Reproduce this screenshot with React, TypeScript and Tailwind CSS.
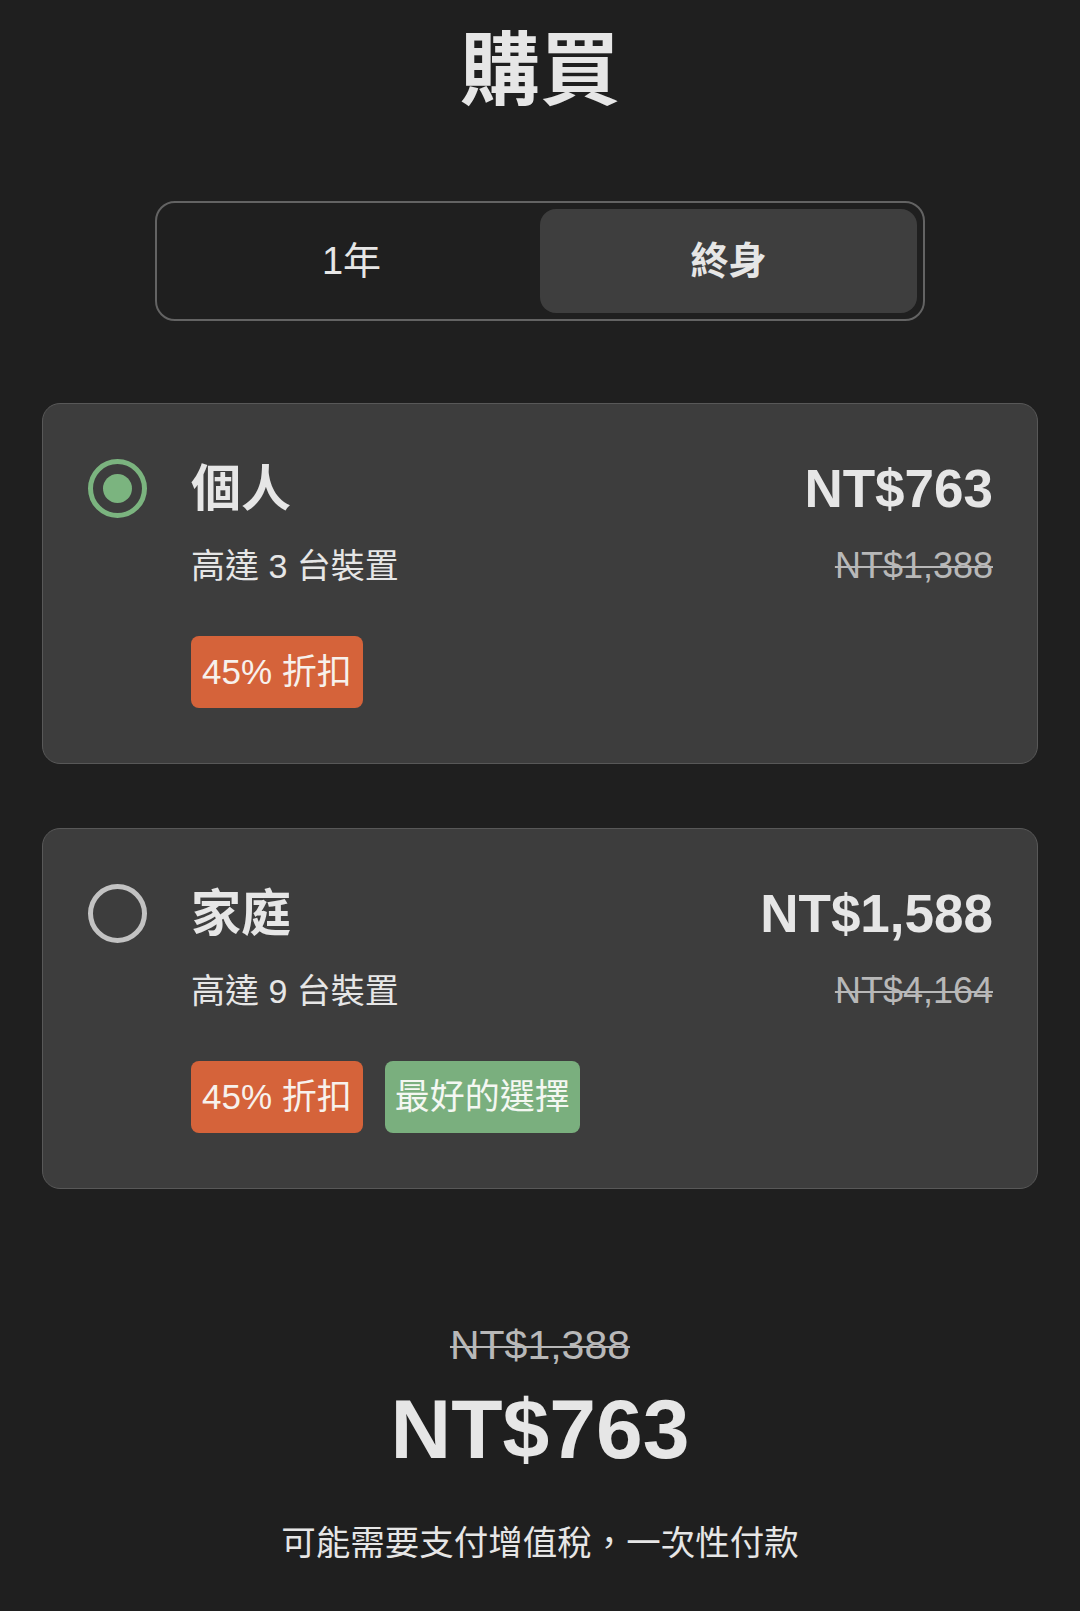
import { useState } from "react";

const plans = [
  {
    id: "personal",
    name: "個人",
    devices: "高達 3 台裝置",
    price: "NT$763",
    original: "NT$1,388",
    best: false,
  },
  {
    id: "family",
    name: "家庭",
    devices: "高達 9 台裝置",
    price: "NT$1,588",
    original: "NT$4,164",
    best: true,
  },
];

export default function App() {
  const [term, setTerm] = useState<"year" | "life">("life");
  const [selected, setSelected] = useState("personal");

  const current = plans.find((p) => p.id === selected) ?? plans[0];

  return (
    <div className="min-h-[1611px] bg-[#1f1f1f] text-[#e6e6e6] font-['Liberation_Sans','Noto_Sans_CJK_TC',sans-serif] flex flex-col items-center pt-[23px]">
      <h1 className="text-[80px] leading-none font-bold font-['Noto_Sans_CJK_TC',sans-serif]">購買</h1>

      {/* 方案期間切換 */}
      <div className="mt-[98px] w-[770px] h-[120px] rounded-[20px] border-2 border-[#636363] p-[6px] flex">
        <button
          onClick={() => setTerm("year")}
          className={`flex-1 rounded-[16px] text-[38px] ${term === "year" ? "bg-[#3e3e3e] font-semibold" : ""}`}
        >
          1年
        </button>
        <button
          onClick={() => setTerm("life")}
          className={`flex-1 rounded-[16px] text-[38px] ${term === "life" ? "bg-[#3e3e3e] font-semibold" : ""}`}
        >
          終身
        </button>
      </div>

      <div className="mt-[82px] w-[996px] flex flex-col gap-[64px]">
        {plans.map((plan) => {
          const active = plan.id === selected;
          return (
            <div
              key={plan.id}
              onClick={() => setSelected(plan.id)}
              className="bg-[#3d3d3d] border border-[#585858] rounded-[18px] pl-[45px] pr-[44px] pt-[55px] pb-[55px] flex cursor-pointer"
            >
              <div
                className={`w-[59px] h-[59px] shrink-0 rounded-full border-[5px] flex items-center justify-center ${
                  active ? "border-[#7bb47f]" : "border-[#c2c2c2]"
                }`}
              >
                {active && <div className="w-[29px] h-[29px] rounded-full bg-[#7bb47f]" />}
              </div>

              <div className="flex-1 ml-[44px] flex flex-col">
                <div className="h-[59px] flex items-center justify-between">
                  <span className="text-[50px] font-bold leading-none">{plan.name}</span>
                  <span className="text-[53px] font-bold leading-none">{plan.price}</span>
                </div>
                <div className="mt-[26px] h-[44px] flex items-center justify-between">
                  <span className="text-[34px] leading-none">{plan.devices}</span>
                  <span className="text-[36px] leading-none text-[#b8b8b8] line-through decoration-2 decoration-[#b8b8b8]">
                    {plan.original}
                  </span>
                </div>
                <div className="mt-[48px] flex gap-[22px]">
                  <span className="h-[72px] px-[11px] rounded-[8px] bg-[#d5633a] text-[#f7f1ec] text-[35px] flex items-center">
                    45% 折扣
                  </span>
                  {plan.best && (
                    <span className="h-[72px] px-[10px] rounded-[8px] bg-[#7aaf7e] text-[#f4f7f2] text-[35px] flex items-center">
                      最好的選擇
                    </span>
                  )}
                </div>
              </div>
            </div>
          );
        })}
      </div>

      <div className="mt-[136px] text-[41px] leading-none text-[#b8b8b8] line-through decoration-2 decoration-[#b8b8b8]">
        {current.original}
      </div>
      <div className="mt-[21px] text-[84px] leading-none font-bold">{current.price}</div>
      <p className="mt-[55px] text-[34.5px] leading-none">可能需要支付增值稅，一次性付款</p>
    </div>
  );
}
